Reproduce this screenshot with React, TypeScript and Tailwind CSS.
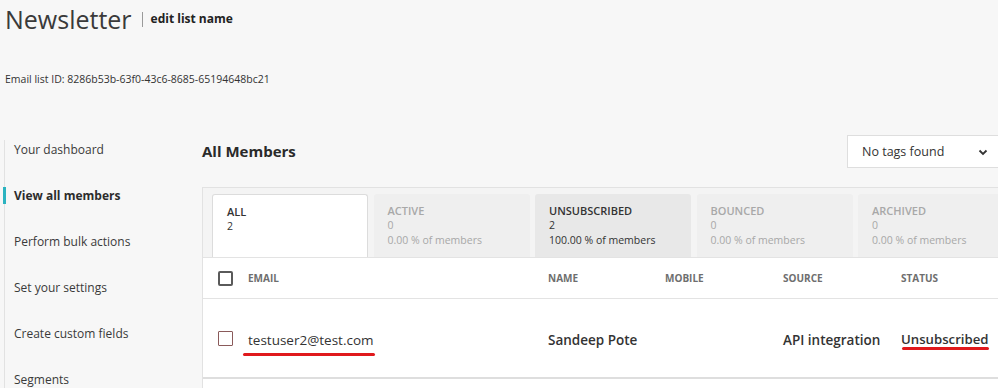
import React from "react";

const font = { fontFamily: '"Open Sans", "Noto Sans", "Liberation Sans", sans-serif' };

function Tab({ label, count, pct, variant }: { label: string; count: string; pct?: string; variant: "white" | "light" | "dark" }) {
  const bg =
    variant === "white"
      ? "bg-white border border-[#dcdcdc] border-b-0"
      : variant === "dark"
      ? "bg-[#e8e8e8]"
      : "bg-[#efefef]";
  const text = variant === "light" ? "text-[#a8a8a8]" : "text-[#333]";
  return (
    <div className={`w-[156px] h-[63px] shrink-0 rounded-t-[3px] pl-[14px] pt-[9px] text-[10.5px] leading-[15px] ${bg} ${text}`}>
      <div className="font-semibold text-[11px]">{label}</div>
      <div>{count}</div>
      {pct && <div>{pct}</div>}
    </div>
  );
}

export default function App() {
  const nav = ["Your dashboard", "View all members", "Perform bulk actions", "Set your settings", "Create custom fields", "Segments"];
  return (
    <div className="w-[998px] h-[388px] overflow-hidden bg-[#f7f7f7] text-[#333]" style={font}>
      <div className="flex items-center h-[38px] pl-[5px]">
        <span className="text-[25px] leading-[38px] text-[#3a3a3a]">Newsletter</span>
        <span className="ml-[10px] w-px h-[15px] bg-[#9a9a9a]" />
        <span className="ml-[8px] text-[12px] font-bold text-[#222]">edit list name</span>
      </div>
      <div className="mt-[33px] pl-[5px] text-[10.5px] leading-[16px] text-[#333]">Email list ID: 8286b53b-63f0-43c6-8685-65194648bc21</div>
      <div className="flex mt-[48px]">
        <div className="w-[198px] ml-[4px] shrink-0 border-l border-[#e2e2e2] h-[260px] flex flex-col gap-[26px] mt-[5px]">
          {nav.map((n, i) => (
            <div key={n} className={`relative pl-[9px] h-[20px] leading-[20px] text-[12px] ${i === 1 ? "font-bold text-[#2c2c2c]" : "text-[#3a3a3a]"}`}>
              {i === 1 && <span className="absolute left-[-2px] top-[1px] w-[3px] h-[17px] bg-[#2bb3c0]" />}
              {n}
            </div>
          ))}
        </div>
        <div className="w-[812px] shrink-0">
          <div className="flex items-center justify-between h-[33px]">
            <span className="text-[15px] font-bold text-[#2a2a2a]">All Members</span>
            <div className="w-[167px] h-[33px] bg-white border border-[#dedede] flex items-center pl-[14px] pt-[1px] text-[12.5px] text-[#333]">
              <span>No tags found</span>
              <svg className="ml-[34px]" width="10" height="7" viewBox="0 0 10 7">
                <path d="M1.5 1.5 L5 5 L8.5 1.5" fill="none" stroke="#333" strokeWidth="1.8" />
              </svg>
            </div>
          </div>
          <div className="mt-[19px] border border-[#e2e2e2] bg-[#f4f4f4]">
            <div className="flex gap-[5.5px] pt-[6px] pl-[9px]">
              <Tab label="ALL" count="2" variant="white" />
              <Tab label="ACTIVE" count="0" pct="0.00 % of members" variant="light" />
              <Tab label="UNSUBSCRIBED" count="2" pct="100.00 % of members" variant="dark" />
              <Tab label="BOUNCED" count="0" pct="0.00 % of members" variant="light" />
              <Tab label="ARCHIVED" count="0" pct="0.00 % of members" variant="light" />
            </div>
            <div className="bg-white border-t border-[#e3e3e3]">
              <div className="flex items-center h-[41px] border-b border-[#e3e3e3] pl-[15px] text-[10px] font-bold text-[#6e6e6e]">
                <div className="w-[30px]">
                  <div className="w-[15px] h-[15px] border-2 border-[#5a5a5a] rounded-[2px]" />
                </div>
                <div className="w-[300px]">EMAIL</div>
                <div className="w-[117px]">NAME</div>
                <div className="w-[118px]">MOBILE</div>
                <div className="w-[118px]">SOURCE</div>
                <div>STATUS</div>
              </div>
              <div className="flex items-center h-[80px] border-b-2 border-[#dedede] pl-[15px] text-[13.5px] text-[#333]">
                <div className="w-[30px]">
                  <div className="w-[15px] h-[15px] border border-[#8a5a5a] rounded-[1px]" />
                </div>
                <div className="w-[300px] pt-[4px]">
                  <span className="relative">
                    testuser2@test.com
                    <span className="absolute left-[-5px] right-[-1px] bottom-[-7px] h-[3px] rounded-full bg-[#e0191c]" />
                  </span>
                </div>
                <div className="w-[117px] pt-[4px] font-semibold">Sandeep Pote</div>
                <div className="w-[118px]" />
                <div className="w-[118px] pt-[4px] font-semibold">API integration</div>
                <div className="pt-[4px] font-semibold text-[13.2px]">
                  <span className="relative">
                    Unsubscribed
                    <span className="absolute left-[1px] right-0 bottom-[-2px] h-[3px] rounded-full bg-[#e0191c]" />
                  </span>
                </div>
              </div>
              <div className="h-[20px]" />
            </div>
          </div>
        </div>
      </div>
    </div>
  );
}
